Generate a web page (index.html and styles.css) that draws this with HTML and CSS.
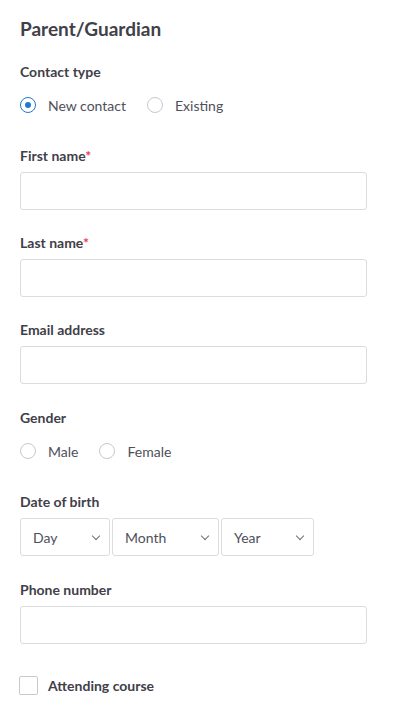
FILE: index.html
```html
<!DOCTYPE html>
<html lang="en">
<head>
    <meta charset="UTF-8">
    <meta name="viewport" content="width=device-width, initial-scale=1.0">
    <title>Parent/Guardian</title>
    <link rel="stylesheet" href="styles.css">
</head>
<body>
    <form class="contact-form" autocomplete="off">
        <h2>Parent/Guardian</h2>

        <div class="form-group">
            <span class="label">Contact type</span>
            <div class="choice-row">
                <label class="choice"><span class="radio checked"></span>New contact</label>
                <label class="choice"><span class="radio"></span>Existing</label>
            </div>
        </div>

        <div class="form-group">
            <label class="label" for="firstName">First name<span class="req">*</span></label>
            <input type="text" id="firstName" name="firstName">
        </div>

        <div class="form-group">
            <label class="label" for="lastName">Last name<span class="req">*</span></label>
            <input type="text" id="lastName" name="lastName">
        </div>

        <div class="form-group wide">
            <label class="label" for="email">Email address</label>
            <input type="text" id="email" name="email">
        </div>

        <div class="form-group">
            <span class="label">Gender</span>
            <div class="choice-row">
                <label class="choice"><span class="radio"></span>Male</label>
                <label class="choice"><span class="radio"></span>Female</label>
            </div>
        </div>

        <div class="form-group wide">
            <span class="label">Date of birth</span>
            <div class="dob">
                <div class="select day">Day<span class="chev"></span></div>
                <div class="select month">Month<span class="chev"></span></div>
                <div class="select year">Year<span class="chev"></span></div>
            </div>
        </div>

        <div class="form-group">
            <label class="label" for="phone">Phone number</label>
            <input type="text" id="phone" name="phone">
        </div>

        <label class="check-row"><span class="checkbox"></span>Attending course</label>
    </form>
</body>
</html>
```

FILE: styles.css
```css
body {
    margin: 0;
    background: #fff;
    font-family: Lato, 'Open Sans', Arial, sans-serif;
    color: #3f3f4a;
}
.contact-form {
    width: 347px;
    padding: 16px 0 0 20px;
}
.contact-form h2 {
    margin: 0 0 20px 0;
    font-size: 19px;
    line-height: 26px;
    font-weight: 700;
    color: #414049;
}
.form-group {
    margin-bottom: 23px;
}
.form-group.wide {
    margin-bottom: 24px;
}
.label {
    display: block;
    font-size: 14px;
    line-height: 20px;
    font-weight: 700;
    color: #414049;
    margin-bottom: 6px;
}
.req {
    color: #e5404f;
}
input {
    display: block;
    width: 100%;
    height: 38px;
    box-sizing: border-box;
    border: 1px solid #dcdcdf;
    border-radius: 3px;
    font-size: 14px;
    padding: 0 12px;
}
.choice-row {
    display: flex;
    gap: 21px;
    padding: 7px 0 8px 0;
    height: 20px;
}
.choice {
    display: flex;
    align-items: center;
    font-size: 14px;
    color: #4f4f5a;
}
.radio {
    width: 16px;
    height: 16px;
    box-sizing: border-box;
    border: 1px solid #c9c9cd;
    border-radius: 50%;
    margin-right: 12px;
    position: relative;
}
.radio.checked {
    border-color: #1f7ad1;
}
.radio.checked::after {
    content: "";
    position: absolute;
    left: 4px;
    top: 4px;
    width: 6px;
    height: 6px;
    border-radius: 50%;
    background: #1f7ad1;
}
.dob {
    display: flex;
    gap: 2px;
}
.select {
    display: flex;
    align-items: center;
    justify-content: space-between;
    height: 38px;
    box-sizing: border-box;
    border: 1px solid #dcdcdf;
    border-radius: 3px;
    padding: 0 10px 0 12px;
    font-size: 14px;
    color: #4f4f5a;
}
.select.day { width: 90px; }
.select.month { width: 107px; }
.select.year { width: 93px; }
.chev {
    width: 5px;
    height: 5px;
    border-right: 1.5px solid #6f6f78;
    border-bottom: 1.5px solid #6f6f78;
    transform: rotate(45deg);
    margin-top: -3px;
}
.check-row {
    display: flex;
    align-items: center;
    font-size: 14px;
    font-weight: 700;
    color: #414049;
    margin-top: 32px;
    margin-left: -1px;
}
.checkbox {
    width: 19px;
    height: 19px;
    box-sizing: border-box;
    border: 1px solid #c9c9cd;
    border-radius: 2px;
    margin-right: 10px;
}
```
